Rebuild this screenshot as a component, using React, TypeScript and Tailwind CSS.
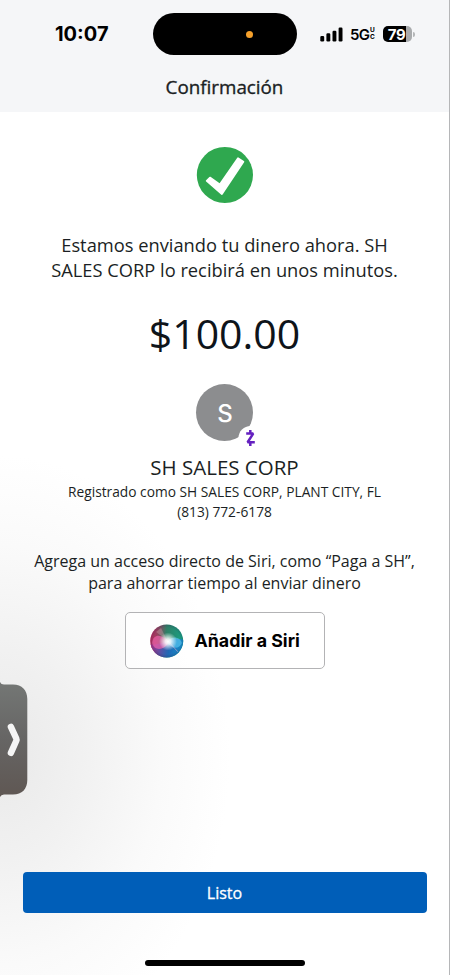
function StatusBar() {
  return (
    <div className="flex h-[68px] items-center font-['Inter',sans-serif] text-black">
      <div className="ml-[55px] w-[98px] text-[20px] font-bold leading-none">10:07</div>

      {/* dynamic island */}
      <div className="flex h-[42px] w-[144px] items-center rounded-full bg-black">
        <span className="ml-[93px] size-[7px] rounded-full bg-[#f5a02b]" />
      </div>

      <svg className="ml-[23px]" width="23" height="15" viewBox="0 0 23 15" fill="#000">
        <rect x="0.3" y="8.9" width="3.9" height="5.6" rx="1.2" />
        <rect x="6.4" y="6.3" width="3.9" height="8.2" rx="1.2" />
        <rect x="12.5" y="3.8" width="3.9" height="10.7" rx="1.2" />
        <rect x="18.6" y="0.6" width="3.9" height="13.9" rx="1.2" />
      </svg>

      <div className="ml-[7px] flex w-[26px] items-center">
        <span className="w-[20px] text-[15px] font-semibold leading-none tracking-[-0.8px]">5G</span>
        <span className="flex flex-col text-[6.5px] font-bold leading-[7px]">
          <span>U</span>
          <span>C</span>
        </span>
      </div>

      {/* battery */}
      <div className="ml-[7px] flex items-center">
        <div className="flex h-[16px] w-[29px] items-center justify-center rounded-[5px] bg-[linear-gradient(to_right,#000_78%,#a9abad_78%)] pr-[2px] text-[15px] font-bold leading-none tracking-[-0.5px] text-white">
          79
        </div>
        <div className="ml-px h-[5px] w-[2px] rounded-r-full bg-[#b4b6b8]" />
      </div>
    </div>
  );
}

function SuccessIcon() {
  return (
    <svg width="57" height="58" viewBox="0 0 57 58">
      <circle cx="28.9" cy="29" r="28.1" fill="#2fa84f" />
      <path
        d="M10.7 34.8L14 31.6L23.8 38.4L42 12.2L47.4 15.8L25.9 48Z"
        fill="#fff"
        stroke="#fff"
        strokeWidth="1.8"
        strokeLinejoin="round"
      />
    </svg>
  );
}

function RecipientAvatar() {
  return (
    <div className="relative size-[57px]">
      <div className="flex size-full items-center justify-center rounded-full bg-[#8c8d8f] pl-px pt-[2px] font-['Inter',sans-serif] text-[24px] font-medium text-white">
        S
      </div>
      {/* zelle */}
      <svg className="absolute left-[41px] top-[41px]" width="26" height="26" viewBox="0 0 26 26">
        <circle cx="13.5" cy="13" r="12" fill="#fff" />
        <path
          d="M9.2 8.6H16.2L10.6 17.2H17.8M13.3 5V8.4M13.3 17.5V21"
          fill="none"
          stroke="#6420c0"
          strokeWidth="2.5"
          strokeLinejoin="bevel"
        />
      </svg>
    </div>
  );
}

function SiriIcon() {
  return (
    <svg width="34" height="34" viewBox="0 0 34 34">
      <defs>
        <linearGradient id="siriBase" x1="0" y1="0.2" x2="1" y2="0.3">
          <stop offset="0" stopColor="#c9275f" />
          <stop offset="0.25" stopColor="#8f4660" />
          <stop offset="0.48" stopColor="#2f7f66" />
          <stop offset="1" stopColor="#17a283" />
        </linearGradient>
        <linearGradient id="siriLow" x1="0" y1="0" x2="1" y2="0.1">
          <stop offset="0" stopColor="#c52f86" />
          <stop offset="0.3" stopColor="#6a4aa0" />
          <stop offset="0.6" stopColor="#2168b5" />
          <stop offset="1" stopColor="#1592cb" />
        </linearGradient>
        <radialGradient id="siriGlow">
          <stop offset="0" stopColor="#fff" />
          <stop offset="0.3" stopColor="#fff" stopOpacity="0.85" />
          <stop offset="1" stopColor="#fff" stopOpacity="0" />
        </radialGradient>
        <radialGradient id="siriEdge">
          <stop offset="0.8" stopColor="#222a55" stopOpacity="0" />
          <stop offset="1" stopColor="#222a55" stopOpacity="0.25" />
        </radialGradient>
        <clipPath id="siriClip">
          <circle cx="16.7" cy="17" r="16.5" />
        </clipPath>
      </defs>
      <g clipPath="url(#siriClip)">
        <rect width="34" height="34" fill="url(#siriBase)" />
        <path d="M0 20C10 23 22 12 34 16V34H0Z" fill="url(#siriLow)" />
        <path d="M2 19C3 9 13 10 19 18C14 27 4 27 2 19Z" fill="#f063ab" opacity="0.7" />
        <path d="M17 18C22 11 30 13 32 19C29 26 21 25 17 18Z" fill="#55c3ee" opacity="0.7" />
        <path d="M6 8L17 16L11 4Z" fill="#c9a3a8" opacity="0.4" />
        <path d="M19 18L28 28" stroke="#d8a5cf" strokeWidth="1" opacity="0.6" />
        <circle cx="18" cy="17.5" r="9" fill="url(#siriGlow)" />
        <circle cx="17" cy="17" r="16.6" fill="url(#siriEdge)" />
      </g>
    </svg>
  );
}

function DrawerHandle() {
  return (
    <div className="absolute left-0 top-[680px]">
      <svg width="28" height="119" viewBox="0 0 28 119">
        <defs>
          <linearGradient id="handle" x1="0" y1="0" x2="0" y2="1">
            <stop offset="0" stopColor="#747775" />
            <stop offset="0.5" stopColor="#666564" />
            <stop offset="1" stopColor="#5f5753" />
          </linearGradient>
        </defs>
        <path
          d="M0 2Q1 4.5 4 4.5H13C22 4.5 27.3 10 27.3 19V100C27.3 109 22 114.5 13 114.5H4Q1 114.5 0 117Z"
          fill="url(#handle)"
        />
        <path
          d="M10.9 46.8L16.3 58.5Q16.8 59.6 16.3 60.7L10.9 72.9"
          fill="none"
          stroke="#f5f5f5"
          strokeWidth="6.4"
          strokeLinecap="round"
          strokeLinejoin="round"
        />
      </svg>
    </div>
  );
}

export default function App() {
  return (
    <div className="relative flex h-[975px] w-[450px] flex-col overflow-hidden border-r border-[#b5b6b8] bg-white bg-[radial-gradient(ellipse_230px_300px_at_0px_755px,#e9e9e9_0%,#f1f1f1_35%,#fafafa_70%,#fff_100%)] font-['Open_Sans',sans-serif] text-[#1b1f24]">
      <header className="h-[112px] shrink-0 bg-[#f5f6f8]">
        <StatusBar />
        <h1 className="text-center text-[18.8px] leading-[38px] [-webkit-text-stroke:0.35px_#1b1f24]">Confirmación</h1>
      </header>

      <main className="flex flex-1 flex-col items-center whitespace-nowrap text-center">
        <div className="mt-[34px]">
          <SuccessIcon />
        </div>

        <p className="mt-[28px] text-[18.3px] leading-[25px]">
          Estamos enviando tu dinero ahora. SH
          <br />
          SALES CORP lo recibirá en unos minutos.
        </p>

        <p className="mt-[25px] text-[41px] leading-[52px] text-[#0e141a]">$100.00</p>

        <div className="mt-[25px]">
          <RecipientAvatar />
        </div>
        <p className="mt-[12px] text-[20.5px] leading-[28px]">SH SALES CORP</p>
        <p className="mt-px text-[13.75px] leading-[20px]">
          Registrado como SH SALES CORP, PLANT CITY, FL
          <br />
          (813) 772-6178
        </p>

        <p className="mt-[28px] text-[16px] leading-[22px]">
          Agrega un acceso directo de Siri, como “Paga a SH”,
          <br />
          para ahorrar tiempo al enviar dinero
        </p>

        <button className="mt-[18px] flex h-[57px] w-[200px] items-center rounded-[5px] border border-[#b3b3b5] bg-white/70 pl-[24px] font-['Inter',sans-serif] text-[17.8px] font-bold text-black">
          <SiriIcon />
          <span className="ml-[11px] pt-[2px]">Añadir a Siri</span>
        </button>
      </main>

      <footer className="flex shrink-0 flex-col items-center">
        <button className="h-[41px] w-[404px] rounded-[4px] bg-[#005eb8] text-[16px] text-white [-webkit-text-stroke:0.3px_#fff]">
          Listo
        </button>
        <div className="mb-[9px] mt-[47px] h-[6px] w-[160px] rounded-full bg-black" />
      </footer>

      <DrawerHandle />
    </div>
  );
}
